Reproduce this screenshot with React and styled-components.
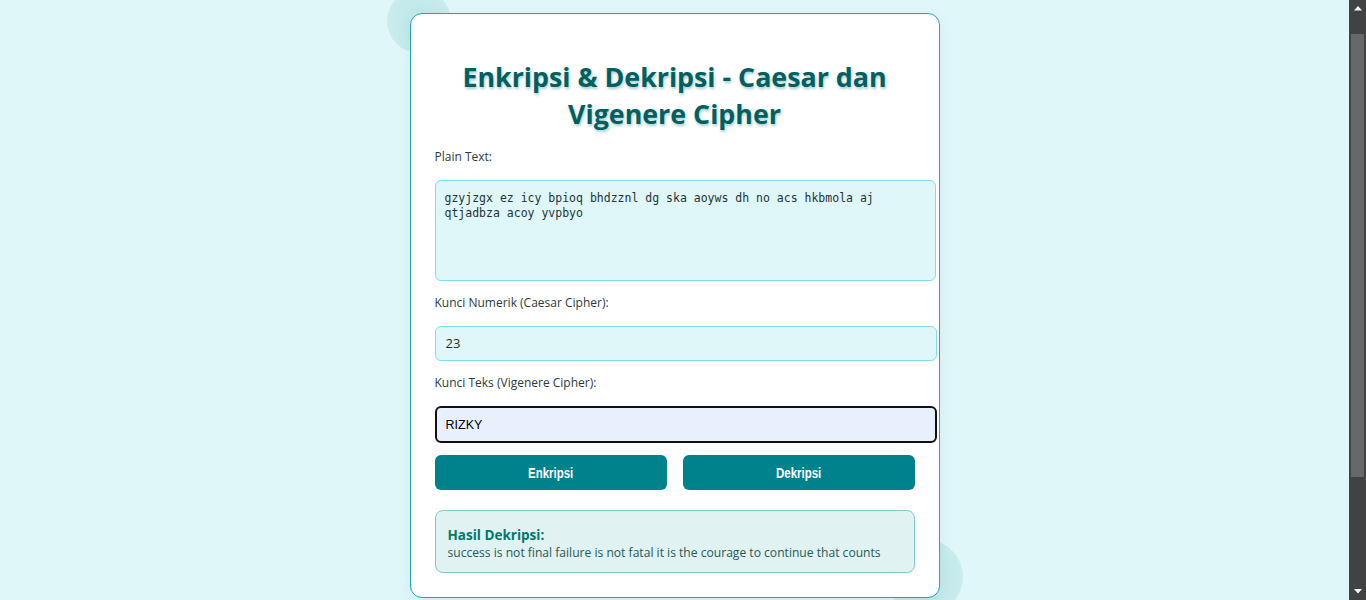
import React from "react";
import styled, { createGlobalStyle } from "styled-components";

const Global = createGlobalStyle`
  html { background: #e0f7fa; }
  body {
    margin: 0;
    font-family: "Open Sans", "Noto Sans", sans-serif;
  }
`;

const Page = styled.div`
  display: flex;
  flex-direction: column;
  align-items: center;
  padding: 13px 17px 40px 0;
`;

const Card = styled.div`
  position: relative;
  width: 530px;
  box-sizing: border-box;
  background: #ffffff;
  border: 1px solid #1ea8b9;
  border-radius: 12px;
  padding: 24px;
  box-shadow: 0 4px 14px rgba(0, 96, 100, 0.08);

  &::before,
  &::after {
    content: "";
    position: absolute;
    border-radius: 50%;
    z-index: -1;
    background: radial-gradient(circle, #bfe6e8 0%, #c7ebec 60%, #d1f0f2 100%);
  }
  &::before {
    width: 64px;
    height: 64px;
    left: -24px;
    top: -25px;
  }
  &::after {
    width: 76px;
    height: 76px;
    right: -24px;
    bottom: -18px;
  }
`;

const Title = styled.h2`
  margin: 20px 0 14px;
  font-family: "Open Sans", "Noto Sans", sans-serif;
  font-size: 26.8px;
  line-height: 37px;
  font-weight: 700;
  text-align: center;
  color: #00605f;
  text-shadow: 1px 2px 3px rgba(0, 110, 115, 0.35);
`;

const Label = styled.label`
  display: block;
  font-size: 12px;
  line-height: 20px;
  padding-top: 1px;
  color: #2d3b3b;
  margin-bottom: 13px;
`;

const Field = styled.div`
  margin-bottom: ${(p) => p.$gap}px;
`;

const TextArea = styled.textarea`
  display: block;
  width: 100%;
  box-sizing: content-box;
  height: 79px;
  padding: 10px 10px 10px 9px;
  border: 1px solid #80deea;
  border-radius: 6px;
  background: #e0f7fa;
  font-family: "DejaVu Sans Mono", "Liberation Mono", monospace;
  font-size: 11.5px;
  line-height: 14.7px;
  color: #1e3535;
  resize: none;
  outline: none;
`;

const Input = styled.input`
  display: block;
  width: 100%;
  box-sizing: content-box;
  height: 15px;
  padding: ${(p) => (p.$focused ? "10px 9px 8px" : "9px 10px")};
  border: ${(p) => (p.$focused ? "2px solid #111111" : "1px solid #80deea")};
  border-radius: 6px;
  background: ${(p) => (p.$focused ? "#e8f0fe" : "#e0f7fa")};
  font-family: ${(p) =>
    p.$focused
      ? '"Liberation Sans", Arial, sans-serif'
      : '"Open Sans", "Noto Sans", sans-serif'};
  font-size: ${(p) => (p.$focused ? "12.5px" : "13px")};
  line-height: 15px;
  color: ${(p) => (p.$focused ? "#000000" : "#1f3030")};
  outline: none;
  margin-top: ${(p) => (p.$focused ? "0" : "1px")};
`;

const Buttons = styled.div`
  display: flex;
  gap: 16px;
  margin-bottom: 20px;
`;

const Button = styled.button`
  flex: 1;
  height: 35px;
  border: none;
  border-radius: 6px;
  background: #00828c;
  color: #ffffff;
  font-family: "Liberation Sans", Arial, sans-serif;
  font-size: 14px;
  font-weight: 700;
  cursor: pointer;
`;

const Narrow = styled.span`
  display: inline-block;
  transform: scaleX(0.82);
`;

const Result = styled.div`
  box-sizing: border-box;
  height: 63px;
  padding: 15px 12px 10px;
  background: #e0f2f1;
  border: 1px solid #80cbc4;
  border-radius: 8px;
  font-size: 12.1px;
  line-height: 18px;
  color: #1f5b55;
`;

const ResultTitle = styled.strong`
  display: block;
  font-size: 13.5px;
  color: #00796b;
  font-weight: 700;
`;

/* drawing of the window's scrollbar at the right edge */
const ScrollBar = styled.div`
  position: fixed;
  top: 0;
  right: 0;
  width: 17px;
  height: 600px;
  background: #424242;
  display: flex;
  flex-direction: column;
`;

const ArrowBox = styled.div`
  flex: 0 0 17px;
  display: flex;
  align-items: center;
  justify-content: center;
`;

const Track = styled.div`
  flex: 1;
  padding: 17px 2px 0;
`;

const Thumb = styled.div`
  height: 443px;
  background: #686868;
`;

const Arrow = ({ down }) => (
  <ArrowBox>
    <svg width="8" height="5" viewBox="0 0 8 5">
      <polygon
        points={down ? "0,0 8,0 4,4.5" : "0,4.5 8,4.5 4,0"}
        fill="#ffffff"
      />
    </svg>
  </ArrowBox>
);

export default function App() {
  return (
    <>
      <Global />
      <Page>
        <Card>
          <Title>
            Enkripsi &amp; Dekripsi - Caesar dan
            <br />
            Vigenere Cipher
          </Title>
          <Field $gap={11}>
            <Label>Plain Text:</Label>
            <TextArea
              readOnly
              value={
                "gzyjzgx ez icy bpioq bhdzznl dg ska aoyws dh no acs hkbmola aj qtjadbza acoy yvpbyo"
              }
            />
          </Field>
          <Field $gap={11}>
            <Label>Kunci Numerik (Caesar Cipher):</Label>
            <Input readOnly value="23" />
          </Field>
          <Field $gap={12}>
            <Label>Kunci Teks (Vigenere Cipher):</Label>
            <Input readOnly $focused value="RIZKY" />
          </Field>
          <Buttons>
            <Button>
              <Narrow>Enkripsi</Narrow>
            </Button>
            <Button>
              <Narrow>Dekripsi</Narrow>
            </Button>
          </Buttons>
          <Result>
            <ResultTitle>Hasil Dekripsi:</ResultTitle>
            success is not final failure is not fatal it is the courage to continue that counts
          </Result>
        </Card>
      </Page>
      <ScrollBar>
        <Arrow />
        <Track>
          <Thumb />
        </Track>
        <Arrow down />
      </ScrollBar>
    </>
  );
}
